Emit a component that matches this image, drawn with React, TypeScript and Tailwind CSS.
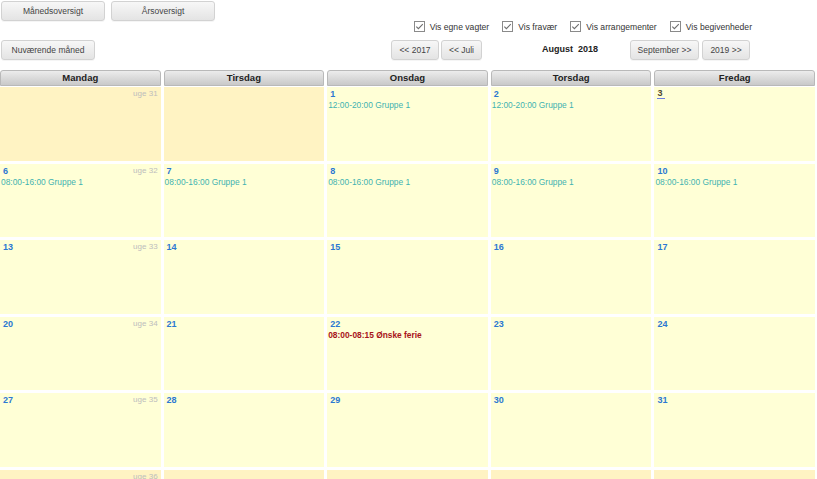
import React from 'react';

type Day = {
  n?: number;
  other?: boolean;
  today?: boolean;
  shift?: string;
  absence?: string;
};

type Week = { uge: number; days: Day[] };

const weekdays = ['Mandag', 'Tirsdag', 'Onsdag', 'Torsdag', 'Fredag'];

const early = '08:00-16:00 Gruppe 1';
const late = '12:00-20:00 Gruppe 1';

const weeks: Week[] = [
  { uge: 31, days: [{ other: true }, { other: true }, { n: 1, shift: late }, { n: 2, shift: late }, { n: 3, today: true }] },
  { uge: 32, days: [{ n: 6, shift: early }, { n: 7, shift: early }, { n: 8, shift: early }, { n: 9, shift: early }, { n: 10, shift: early }] },
  { uge: 33, days: [{ n: 13 }, { n: 14 }, { n: 15 }, { n: 16 }, { n: 17 }] },
  { uge: 34, days: [{ n: 20 }, { n: 21 }, { n: 22, absence: '08:00-08:15 Ønske ferie' }, { n: 23 }, { n: 24 }] },
  { uge: 35, days: [{ n: 27 }, { n: 28 }, { n: 29 }, { n: 30 }, { n: 31 }] },
  { uge: 36, days: [{ other: true }, { other: true }, { other: true }, { other: true }, { other: true }] },
];

const Button: React.FC<{ label: string; className?: string }> = ({ label, className = '' }) => (
  <button
    className={`h-[20px] rounded-[3px] border border-[#d2d2d2] bg-gradient-to-b from-[#f7f7f7] to-[#e4e4e4] text-[8.5px] text-[#444] shadow-[0_1px_0_rgba(0,0,0,0.04)] ${className}`}
  >
    {label}
  </button>
);

const Check: React.FC<{ label: string }> = ({ label }) => (
  <label className="flex items-center gap-[5px]">
    <svg width="11" height="11" viewBox="0 0 11 11" className="shrink-0">
      <rect x="0.5" y="0.5" width="10" height="10" fill="#fff" stroke="#8a8a8a" />
      <path d="M2.3 5.6 L4.4 7.7 L8.8 3.1" fill="none" stroke="#6f6f6f" strokeWidth="1.1" />
    </svg>
    <span className="text-[8.6px] text-[#333]">{label}</span>
  </label>
);

const Cell: React.FC<{ day: Day; uge?: number }> = ({ day, uge }) => (
  <div className={`h-[73.6px] ${day.other ? 'bg-[#fff3c3]' : 'bg-[#ffffd6]'}`}>
    <div className="flex h-[12px] items-end justify-between pl-[3px] pr-[3px]">
      {day.n !== undefined ? (
        day.today ? (
          <span className="border-b border-[#6d7fe2] pr-[3px] text-[9px] font-bold leading-[10px] text-[#4d4732]">{day.n}</span>
        ) : (
          <span className="text-[9px] font-bold leading-[10px] text-[#2c78d2]">{day.n}</span>
        )
      ) : (
        <span />
      )}
      {uge !== undefined && <span className="text-[8px] leading-[10px] text-[#bdbdbd]">uge {uge}</span>}
    </div>
    {day.shift && <div className="pl-[1px] pt-[1px] text-[8.4px] leading-[10px] text-[#3fb3b1]">{day.shift}</div>}
    {day.absence && (
      <div className="pl-[1px] pt-[1px] text-[8.4px] font-bold leading-[10px] text-[#a8141a]">{day.absence}</div>
    )}
  </div>
);

export default function App() {
  return (
    <div className="h-[479px] w-[817px] overflow-hidden bg-white font-['Liberation_Sans',Arial,sans-serif]">
      <div className="flex gap-[6px] pl-[1px] pt-[1px]">
        <Button label="Månedsoversigt" className="w-[104px]" />
        <Button label="Årsoversigt" className="w-[104px]" />
      </div>

      <div className="mt-[-1px] flex h-[14px] w-[752px] items-center justify-end gap-[13px]">
        <Check label="Vis egne vagter" />
        <Check label="Vis fravær" />
        <Check label="Vis arrangementer" />
        <Check label="Vis begivenheder" />
      </div>

      <div className="mt-[6px] flex h-[20px] w-[750px] items-center pl-[1px]">
        <Button label="Nuværende måned" className="w-[94px]" />
        <div className="ml-auto flex items-center">
          <Button label="<< 2017" className="w-[48px]" />
          <Button label="<< Juli" className="ml-[2px] w-[41px]" />
          <div className="w-[148px] whitespace-pre pl-[60px] text-[9px] font-bold text-[#222]">August  2018</div>
          <Button label="September >>" className="w-[69px]" />
          <Button label="2019 >>" className="ml-[3px] w-[48px]" />
        </div>
      </div>

      <div className="mt-[10px] w-[815px]">
        <div className="grid grid-cols-5 gap-x-[3px]">
          {weekdays.map((d) => (
            <div
              key={d}
              className="flex h-[16px] items-center justify-center rounded-t-[3px] border border-[#b9b9b9] bg-gradient-to-b from-[#ececec] to-[#c9c9c9] text-[9.5px] font-bold text-[#222]"
            >
              {d}
            </div>
          ))}
        </div>
        <div className="mt-[1px] grid grid-cols-5 gap-[3px]">
          {weeks.map((w) =>
            w.days.map((day, i) => <Cell key={`${w.uge}-${i}`} day={day} uge={i === 0 ? w.uge : undefined} />)
          )}
        </div>
      </div>
    </div>
  );
}
